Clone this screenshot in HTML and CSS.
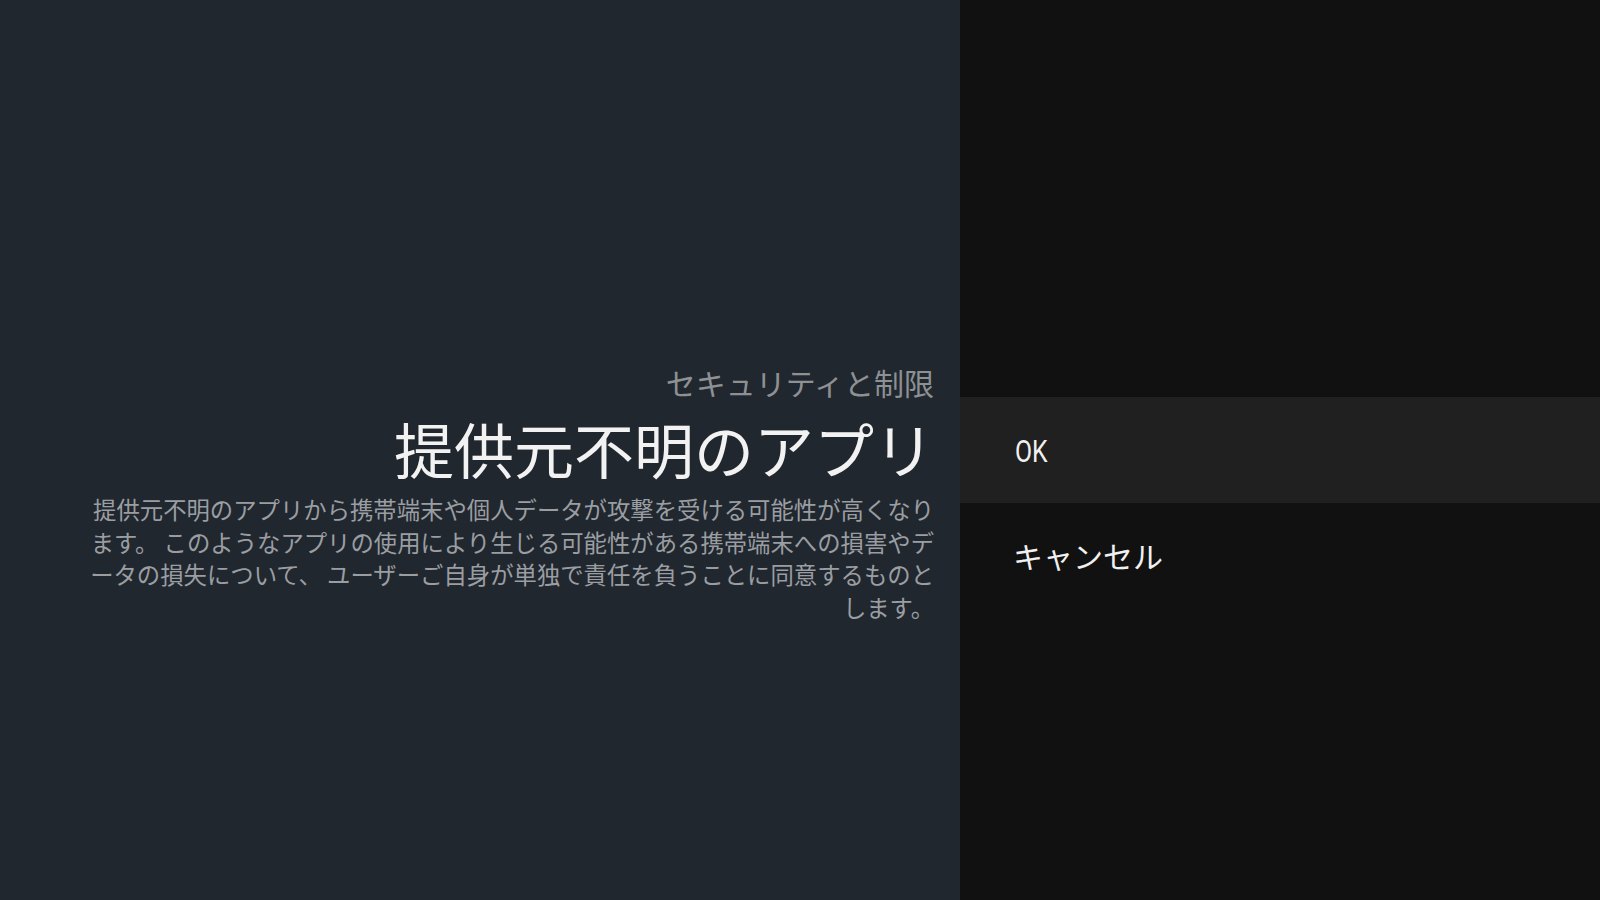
FILE: index.html
```html
<!DOCTYPE html>
<html lang="ja">
<head>
<meta charset="utf-8">
<link rel="stylesheet" href="styles.css">
</head>
<body>
<div class="screen">
  <section class="info">
    <div class="info-inner">
      <div class="breadcrumb">セキュリティと制限</div>
      <h1 class="title">提供元不明のアプリ</h1>
      <p class="desc">提供元不明のアプリから携帯端末や個人データが攻撃を受ける可能性が高くなります。 このようなアプリの使用により生じる可能性がある携帯端末への損害やデータの損失について、 ユーザーご自身が単独で責任を負うことに同意するものとします。</p>
    </div>
  </section>
  <section class="actions">
    <div class="action selected"><span class="label latin">OK</span></div>
    <div class="action"><span class="label cjk">キャンセル</span></div>
  </section>
</div>
</body>
</html>
```
FILE: styles.css
```css
html, body {
  margin: 0;
  padding: 0;
  width: 1600px;
  height: 900px;
  overflow: hidden;
  background: #111111;
  font-family: "Noto Sans CJK JP", "Noto Sans", sans-serif;
}
.screen {
  display: flex;
  width: 1600px;
  height: 900px;
}
.info {
  width: 960px;
  flex: none;
  background: #21272e;
  display: flex;
  justify-content: flex-end;
}
.info-inner {
  width: 845px;
  padding-top: 362px;
  padding-right: 26px;
  text-align: right;
  display: flex;
  flex-direction: column;
}
.breadcrumb {
  font-size: 30px;
  line-height: 40px;
  color: #8e9194;
}
.title {
  margin: 11px 0 0;
  font-size: 60px;
  line-height: 70px;
  font-weight: 400;
  color: #f2f2f2;
}
.desc {
  margin: 10px 0 0;
  font-size: 23.36px;
  line-height: 32.6px;
  color: #9a9ea2;
}
.actions {
  flex: 1;
  padding-top: 397px;
  display: flex;
  flex-direction: column;
}
.action {
  height: 106px;
  display: flex;
  align-items: center;
  padding-left: 53px;
}
.action.selected {
  background: #202020;
}
.label {
  font-size: 30px;
  color: #f0f0f0;
}
.cjk {
  margin-top: -2px;
}
.latin {
  display: inline-block;
  font-family: "Roboto", sans-serif;
  font-size: 31px;
  transform: scaleX(0.8);
  transform-origin: left center;
  margin-left: 2px;
  margin-top: 2px;
}
```
